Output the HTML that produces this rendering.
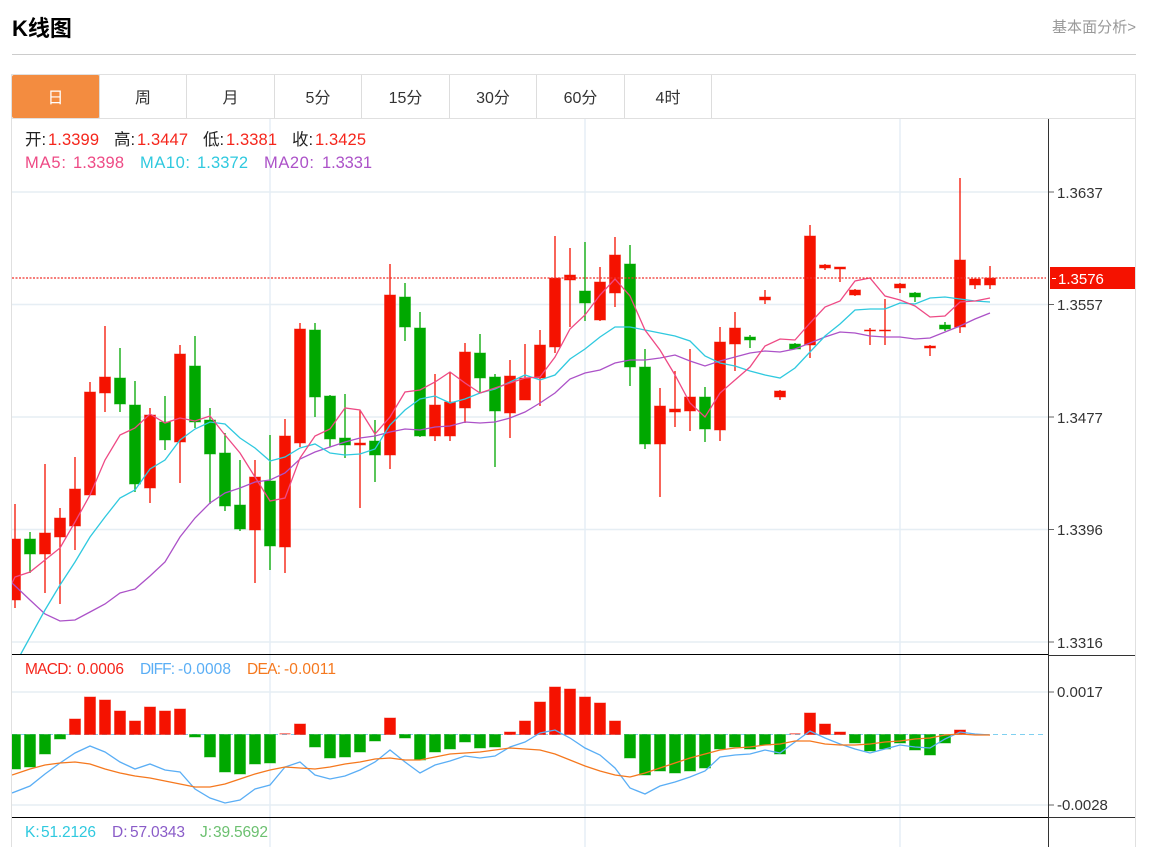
<!DOCTYPE html>
<html lang="zh">
<head>
<meta charset="utf-8">
<title>K线图</title>
<style>
html,body{margin:0;padding:0;background:#fff;width:1161px;height:847px;overflow:hidden}
svg{display:block}
text{font-family:"Liberation Sans","Noto Sans CJK SC",sans-serif}
.t{font-size:16px;fill:#333;text-anchor:middle}
.h{font-size:16.5px}
.a{font-size:15px;fill:#333}
.m{font-size:15.5px}
</style>
</head>
<body>
<svg width="1161" height="847" viewBox="0 0 1161 847" xmlns="http://www.w3.org/2000/svg">
<defs>
<clipPath id="c1"><rect x="12" y="119" width="1036" height="536"/></clipPath>
<clipPath id="c2"><rect x="12" y="656" width="1036" height="161"/></clipPath>
</defs>

<!-- header -->
<text x="12" y="36" font-size="22" font-weight="bold" fill="#000">K线图</text>
<text x="1136" y="32" font-size="15" fill="#999" text-anchor="end" textLength="84">基本面分析&gt;</text>
<rect x="12" y="54" width="1124" height="1" fill="#ccc"/>

<!-- container and tabs -->
<path d="M11.5 847V74.5H1135.5V847" fill="none" stroke="#e0e0e0"/>
<path d="M12 118.5H1135" stroke="#e0e0e0" fill="none"/>
<rect x="12" y="75" width="87.5" height="43" rx="2" fill="#f38c40"/>
<path d="M99.5 75V118M186.5 75V118M274.5 75V118M361.5 75V118M449.5 75V118M536.5 75V118M624.5 75V118M711.5 75V118" stroke="#ddd" fill="none"/>
<text class="t" x="55.5" y="103" style="fill:#fff">日</text>
<text class="t" x="143" y="103">周</text>
<text class="t" x="230.5" y="103">月</text>
<text class="t" x="318" y="103">5分</text>
<text class="t" x="405.5" y="103">15分</text>
<text class="t" x="493" y="103">30分</text>
<text class="t" x="580.5" y="103">60分</text>
<text class="t" x="668" y="103">4时</text>

<!-- grid -->
<path d="M12 192H1048M12 304.5H1048M12 417H1048M12 529.5H1048M12 642H1048M12 692H1048M12 805H1048" stroke="#e6eef4" stroke-width="1.4" fill="none"/>
<path d="M270 119V847M585 119V847M900 119V847" stroke="#e4edf5" stroke-width="1.4" fill="none"/>

<!-- candles -->
<g clip-path="url(#c1)">
<path stroke="#f51200" stroke-width="1.3" fill="none" d="M15 504V608M45 464V593M60 508V604M75 457V550M90 382V495M105 326V412M150 408V503M180 345V483M255 460V583M285 419V573M300 323V447M360 410V508M390 264V469M435 374V441M450 372V441M465 343V423M510 360V438M525 344V400M540 330V406M555 236V353M570 248V327M600 267V321M615 237V307M660 388V497M675 371V427M690 349V431M720 327V441M735 312V371M765 290V304M780 390V400M810 225V358M825 264V270M840 267V282M855 289V296M870 328V345M885 299V345M900 283V293M930 345V356M960 178V333M975 278V289M990 266V289"/>
<path stroke="#00a800" stroke-width="1.3" fill="none" d="M30 532V573M120 348V412M135 381V492M165 396V450M195 336V428M210 408V504M225 433V511M240 460V531M270 435V570M315 323V417M330 395V447M345 394V458M375 420V482M405 283V341M420 312V437M480 334V393M495 374V467M585 242V321M630 245V386M645 349V449M705 387V442M750 335V348M795 343V349M915 292V302M945 322V331"/>
<path fill="#f51200" stroke="#f51200" stroke-opacity=".45" d="M9.5 539h11V600h-11zM39.5 533h11V554h-11zM54.5 518h11V537h-11zM69.5 489h11V526h-11zM84.5 392h11V495h-11zM99.5 377h11V393h-11zM144.5 415h11V488h-11zM174.5 354h11V442h-11zM249.5 477h11V530h-11zM279.5 436h11V547h-11zM294.5 329h11V443h-11zM354.5 443h11V445h-11zM384.5 295h11V455h-11zM429.5 405h11V436h-11zM444.5 402h11V436h-11zM459.5 352h11V408h-11zM504.5 376h11V413h-11zM519.5 378h11V400h-11zM534.5 345h11V378h-11zM549.5 278h11V347h-11zM564.5 275h11V280h-11zM594.5 282h11V320h-11zM609.5 255h11V293h-11zM654.5 406h11V444h-11zM669.5 409h11V412h-11zM684.5 397h11V411h-11zM714.5 342h11V430h-11zM729.5 328h11V344h-11zM759.5 297h11V300h-11zM774.5 391h11V397h-11zM804.5 236h11V345h-11zM819.5 265h11V268h-11zM834.5 267h11V269h-11zM849.5 290h11V295h-11zM864.5 330h11V331h-11zM879.5 330h11V331h-11zM894.5 284h11V288h-11zM924.5 346h11V348h-11zM954.5 260h11V327h-11zM969.5 279h11V285h-11zM984.5 278h11V285h-11z"/>
<path fill="#00a800" stroke="#00a800" stroke-opacity=".45" d="M24.5 539h11V554h-11zM114.5 378h11V404h-11zM129.5 405h11V484h-11zM159.5 422h11V440h-11zM189.5 366h11V422h-11zM204.5 420h11V454h-11zM219.5 453h11V506h-11zM234.5 505h11V529h-11zM264.5 481h11V546h-11zM309.5 330h11V397h-11zM324.5 396h11V439h-11zM339.5 438h11V445h-11zM369.5 441h11V455h-11zM399.5 297h11V327h-11zM414.5 328h11V436h-11zM474.5 353h11V378h-11zM489.5 377h11V411h-11zM579.5 291h11V303h-11zM624.5 264h11V367h-11zM639.5 367h11V444h-11zM699.5 397h11V429h-11zM744.5 337h11V340h-11zM789.5 344h11V349h-11zM909.5 293h11V297h-11zM939.5 325h11V329h-11z"/>

<!-- MA lines -->
<path fill="none" stroke="#ac52c8" stroke-width="1.3" d="M12 583L30 600L45 614L60 621L75 620L90 612L105 604L120 593L135 589L150 576L165 562L180 537L195 518L210 503L225 493L240 488L255 482L270 480L285 473L300 459L315 452L330 447L345 442L360 438L375 436L390 432L405 429L420 430L435 427L450 426L465 422L480 423L495 422L510 418L525 412L540 403L555 393L570 379L585 373L600 370L615 363L630 360L645 360L660 358L675 355L690 361L705 366L720 361L735 357L750 353L765 351L780 352L795 349L810 343L825 337L840 332L855 333L870 336L885 337L900 337L915 339L930 338L945 332L960 326L975 319L990 313"/>
<path fill="none" stroke="#2fc9df" stroke-width="1.3" d="M12 670L23 650L45 610L60 585L75 562L90 537L105 517L120 498L135 490L150 469L165 460L180 440L195 429L210 422L225 424L240 438L255 448L270 461L285 457L300 448L315 444L330 453L345 455L360 454L375 449L390 425L405 410L420 399L435 396L450 403L465 399L480 393L495 389L510 382L525 375L540 380L555 375L570 359L585 349L600 337L615 327L630 327L645 330L660 333L675 336L690 341L705 356L720 363L735 366L750 371L765 375L780 378L795 368L810 352L825 336L840 324L855 310L870 309L885 309L900 303L915 304L930 298L945 297L960 299L975 301L990 302"/>
<path fill="none" stroke="#ee4a85" stroke-width="1.3" d="M12 583L15 577L30 572L45 560L60 548L75 522L90 495L105 460L120 435L135 428L150 414L165 423L180 418L195 421L210 416L225 435L240 453L255 477L270 501L285 498L300 458L315 436L330 429L345 408L360 410L375 434L390 417L405 392L420 390L435 382L450 372L465 383L480 393L495 388L510 383L525 378L540 377L555 357L570 329L585 315L600 295L615 279L630 296L645 330L660 350L675 375L690 403L705 417L720 393L735 380L750 367L765 346L780 339L795 340L810 323L825 307L840 301L855 281L870 278L885 296L900 300L915 306L930 317L945 316L960 302L975 301L990 298"/>
</g>
<path d="M12 278H1046" stroke="#f0302a" stroke-width="1.2" stroke-dasharray="2 1.5" fill="none"/>

<!-- MACD panel -->
<path d="M12 734.5H1044" stroke="#7fd0f0" stroke-dasharray="5 4" fill="none"/>
<g clip-path="url(#c2)">
<path fill="#00a800" stroke="#00a800" stroke-opacity=".45" d="M9.5 734.5h11V769h-11zM24.5 734.5h11V767h-11zM39.5 734.5h11V754h-11zM54.5 734.5h11V739h-11zM189.5 734.5h11V737h-11zM204.5 734.5h11V757h-11zM219.5 734.5h11V772h-11zM234.5 734.5h11V774h-11zM249.5 734.5h11V764h-11zM264.5 734.5h11V763h-11zM309.5 734.5h11V747h-11zM324.5 734.5h11V758h-11zM339.5 734.5h11V757h-11zM354.5 734.5h11V752h-11zM369.5 734.5h11V741h-11zM399.5 734.5h11V738h-11zM414.5 734.5h11V760h-11zM429.5 734.5h11V752h-11zM444.5 734.5h11V749h-11zM459.5 734.5h11V742h-11zM474.5 734.5h11V748h-11zM489.5 734.5h11V747h-11zM624.5 734.5h11V758h-11zM639.5 734.5h11V775h-11zM654.5 734.5h11V771h-11zM669.5 734.5h11V773h-11zM684.5 734.5h11V771h-11zM699.5 734.5h11V768h-11zM714.5 734.5h11V749h-11zM729.5 734.5h11V747h-11zM744.5 734.5h11V749h-11zM759.5 734.5h11V745h-11zM774.5 734.5h11V754h-11zM849.5 734.5h11V743h-11zM864.5 734.5h11V751h-11zM879.5 734.5h11V749h-11zM894.5 734.5h11V743h-11zM909.5 734.5h11V750h-11zM924.5 734.5h11V755h-11zM939.5 734.5h11V743h-11z"/>
<path fill="#f51200" stroke="#f51200" stroke-opacity=".45" d="M69.5 719h11V734.5h-11zM84.5 697h11V734.5h-11zM99.5 700h11V734.5h-11zM114.5 711h11V734.5h-11zM129.5 721h11V734.5h-11zM144.5 707h11V734.5h-11zM159.5 711h11V734.5h-11zM174.5 709h11V734.5h-11zM294.5 724h11V734.5h-11zM384.5 718h11V734.5h-11zM504.5 732h11V734.5h-11zM519.5 721h11V734.5h-11zM534.5 702h11V734.5h-11zM549.5 687h11V734.5h-11zM564.5 689h11V734.5h-11zM579.5 697h11V734.5h-11zM594.5 703h11V734.5h-11zM609.5 721h11V734.5h-11zM804.5 713h11V734.5h-11zM819.5 724h11V734.5h-11zM834.5 732h11V734.5h-11zM954.5 730h11V734.5h-11z"/>
<path fill="#f51200" opacity=".5" d="M279.5 733h11v1.5h-11zM789.5 733h11v1.5h-11z"/>
<path fill="none" stroke="#5aaef5" stroke-width="1.3" d="M12 793L30 786L45 774L60 763L75 753L90 746L105 752L120 762L135 769L150 764L165 770L180 772L195 789L210 798L225 803L240 800L255 789L270 785L285 767L300 762L315 775L330 779L345 776L360 770L375 762L390 750L405 762L420 773L435 765L450 761L465 756L480 758L495 756L510 747L525 742L540 733L555 730L570 738L585 748L600 755L615 768L630 788L645 794L660 786L675 782L690 777L705 771L720 757L735 755L750 754L765 750L780 753L795 742L810 731L825 738L840 744L855 749L870 753L885 749L900 745L915 747L930 748L945 739L960 732L975 734L990 735"/>
<path fill="none" stroke="#f5781e" stroke-width="1.3" d="M12 775L30 769L45 765L60 763L75 762L90 764L105 769L120 773L135 776L150 778L165 781L180 784L195 787L210 787L225 784L240 779L255 774L270 770L285 767L300 768L315 769L330 767L345 764L360 762L375 759L390 758L405 760L420 760L435 757L450 754L465 753L480 752L495 750L510 748L525 749L540 750L555 754L570 760L585 766L600 771L615 775L630 777L645 773L660 768L675 763L690 758L705 754L720 750L735 748L750 747L765 745L780 744L795 741L810 741L825 744L840 745L855 745L870 744L885 742L900 741L915 739L930 738L945 735L960 734L975 735L990 735"/>
</g>

<!-- separators and axis -->
<path d="M12 654.5H1048M12 817.5H1048" stroke="#000" fill="none"/>
<path d="M1048.5 119V847" stroke="#333" fill="none"/>
<path d="M1049 655.5H1135M1049 817.5H1135" stroke="#333" fill="none"/>
<path d="M1049 192H1054M1049 304.5H1054M1049 417H1054M1049 529.5H1054M1049 642H1054M1049 692H1054M1049 805H1054" stroke="#666" fill="none"/>

<rect x="1050" y="267" width="85" height="22" fill="#f51200"/>
<path d="M1052 278.5H1056" stroke="#fff" fill="none"/>
<text class="a" x="1058" y="284" style="fill:#fff">1.3576</text>
<text class="a" x="1057" y="198">1.3637</text>
<text class="a" x="1057" y="310">1.3557</text>
<text class="a" x="1057" y="423">1.3477</text>
<text class="a" x="1057" y="535">1.3396</text>
<text class="a" x="1057" y="648">1.3316</text>
<text class="a" x="1057" y="697">0.0017</text>
<text class="a" x="1057" y="810">-0.0028</text>

<!-- legends -->
<text class="h" x="25" y="145" fill="#222">开:</text>
<text class="h" x="48" y="145" fill="#f5261c" textLength="51">1.3399</text>
<text class="h" x="114" y="145" fill="#222">高:</text>
<text class="h" x="137" y="145" fill="#f5261c" textLength="51">1.3447</text>
<text class="h" x="203" y="145" fill="#222">低:</text>
<text class="h" x="226" y="145" fill="#f5261c" textLength="51">1.3381</text>
<text class="h" x="292" y="145" fill="#222">收:</text>
<text class="h" x="315" y="145" fill="#f5261c" textLength="51">1.3425</text>
<text class="h" x="25" y="168" fill="#ee4a85" textLength="41">MA5:</text>
<text class="h" x="73" y="168" fill="#ee4a85" textLength="51">1.3398</text>
<text class="h" x="140" y="168" fill="#2fc9df" textLength="50">MA10:</text>
<text class="h" x="197" y="168" fill="#2fc9df" textLength="51">1.3372</text>
<text class="h" x="264" y="168" fill="#ac52c8" textLength="50">MA20:</text>
<text class="h" x="322" y="168" fill="#ac52c8" textLength="50">1.3331</text>
<text class="m" x="25" y="674" fill="#f5261c" textLength="47">MACD:</text>
<text class="m" x="77" y="674" fill="#f5261c" textLength="47">0.0006</text>
<text class="m" x="140" y="674" fill="#5aaef5" textLength="35">DIFF:</text>
<text class="m" x="178" y="674" fill="#5aaef5" textLength="53">-0.0008</text>
<text class="m" x="247" y="674" fill="#f5781e" textLength="34">DEA:</text>
<text class="m" x="284" y="674" fill="#f5781e" textLength="52">-0.0011</text>
<text class="m" x="25" y="837" fill="#2fc9df">K:</text>
<text class="m" x="41" y="837" fill="#2fc9df" textLength="55">51.2126</text>
<text class="m" x="112" y="837" fill="#8a5cc8">D:</text>
<text class="m" x="130" y="837" fill="#8a5cc8" textLength="55">57.0343</text>
<text class="m" x="200" y="837" fill="#6cc070">J:</text>
<text class="m" x="213" y="837" fill="#6cc070" textLength="55">39.5692</text>
</svg>
</body>
</html>
